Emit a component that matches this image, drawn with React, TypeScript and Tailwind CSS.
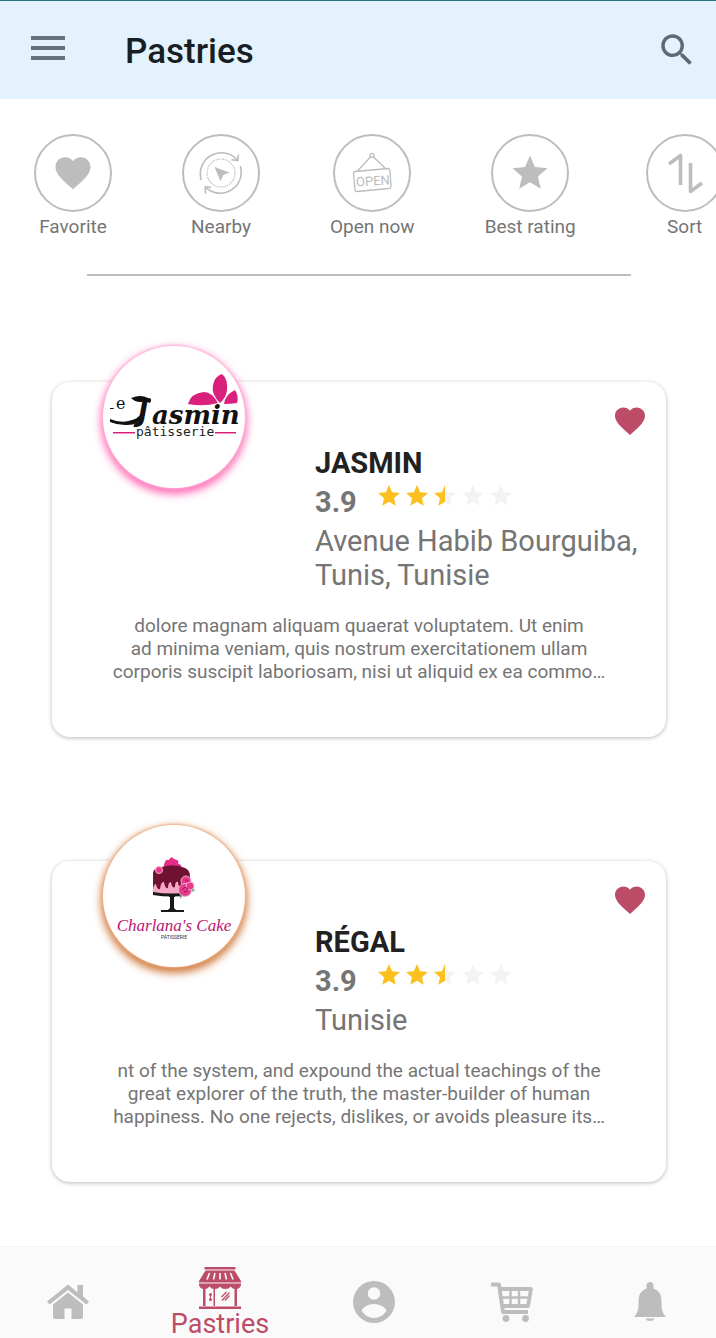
import React from 'react';

const HEART =
  'M12 21.35l-1.45-1.32C5.4 15.36 2 12.28 2 8.5 2 5.42 4.42 3 7.5 3c1.74 0 3.41.81 4.5 2.09C13.09 3.81 14.76 3 16.5 3 19.58 3 22 5.42 22 8.5c0 3.78-3.4 6.86-8.55 11.54L12 21.35z';
const STAR =
  'M12 17.27L18.18 21l-1.64-7.03L22 9.24l-7.19-.61L12 2 9.19 8.63 2 9.24l5.46 4.73L5.82 21z';

function NearbyIcon() {
  return (
    <svg viewBox="0 0 48 48" className="size-12" fill="none" stroke="#bdbdbd" strokeWidth="1.6">
      <path d="M4.3 31A21 21 0 0 1 39.8 10.5M43.3 17A21 21 0 0 1 9.2 38.800" />
      <path d="M34.500 10.800l6.300.7.6-6M8.500 44.500l-.3-6.700 6 .6" />
      <circle cx="24" cy="24" r="14" strokeWidth="1.200" strokeDasharray="1.400 1" />
      <path d="M17.500 18l15 5.600-6.200 2.400-2.800 6.300z" fill="#bdbdbd" stroke="none" />
    </svg>
  );
}

function OpenIcon() {
  return (
    <svg viewBox="0 0 48 48" className="size-12" fill="none" stroke="#bdbdbd" strokeWidth="1.300">
      <circle cx="24" cy="6.300" r="2" />
      <path d="M22.500 8L9 22.500M25.500 8L38 20" />
      <path d="M7 22.500l33-3q1.800 0 2 2l1 16q0 1.800-2 2l-32 3q-2 0-2-2l-1.500-16q0-2 1.500-2z" />
      <text
        x="8"
        y="36.500"
        transform="rotate(-4 24 32)"
        fontFamily="Roboto, sans-serif"
        fontSize="13"
        fill="#bdbdbd"
        stroke="none"
      >
        OPEN
      </text>
    </svg>
  );
}

function SortIcon() {
  return (
    <svg viewBox="0 0 48 48" className="size-12" fill="none" stroke="#bdbdbd" strokeWidth="3.600" strokeLinejoin="round">
      <path d="M8 15L19.500 6.500V36M29.500 14v28.500L41 34" />
    </svg>
  );
}

function ShopIcon() {
  return (
    <svg viewBox="0 0 42 44" className="h-11 w-[42px] shrink-0" fill="#bc4c68">
      <path d="M5.500 1h31v2.500h-31zM6.500 4.500h29L42 15v1.500H0V15z" />
      <path d="M0 17.500h42v1.500q-1 4-5.200 4-3.600 0-5.200-2.500-1.600 2.500-5.300 2.500T21 20.500Q19.400 23 15.800 23t-5.300-2.500Q8.800 23 5.200 23 1 23 0 19z" />
      <path d="M4 22h2.500v18H4zM14.500 22H16v18h-1.500zM35.500 22H38v18h-2.500zM0 40.500h42V43H0z" />
      <circle cx="11.500" cy="28.500" r="1.500" />
      <circle cx="11.500" cy="33.500" r="1.500" />
      <path d="M11 28h1v6h-1z" />
      <path d="M22.500 31l5-5M23 34.500l7.500-8M26 34.500l4.500-5" stroke="#bc4c68" strokeWidth="1.300" />
      <path d="M10.500 7L8 13.500M16 7l-1.500 6.500M21 7v6.500M26 7l1.500 6.500M31.500 7l2.500 6.500" stroke="#fafafa" strokeWidth="1.600" />
    </svg>
  );
}

function HomeIcon() {
  return (
    <svg viewBox="0 0 42 36" className="h-9 w-[42px]" fill="#bdbdbd">
      <path d="M21 .5L0 17.500l2.500 3L21 6l18.500 14.500 2.500-3-6-5V1h-5.500v7.500z" />
      <path d="M21 8.500L6 20.500V33q0 2 2 2h9.500V24.500h7V35H34q2 0 2-2V20.500z" />
    </svg>
  );
}

function AccountIcon() {
  return (
    <svg viewBox="0 0 42 42" className="size-[42px]">
      <circle cx="21" cy="21" r="21" fill="#bdbdbd" />
      <circle cx="21" cy="12.500" r="6.200" fill="#fafafa" />
      <path d="M8.500 29.500q4-6.500 12.500-6.500t12.500 6.500Q29 37 21 37T8.500 29.500z" fill="#fafafa" />
    </svg>
  );
}

function CartIcon() {
  return (
    <svg viewBox="0 0 42 40" className="h-10 w-[42px]" fill="none" stroke="#bdbdbd">
      <path d="M0 2.500h8l4 27.500h25" strokeWidth="3.800" strokeLinejoin="round" />
      <path d="M9 7h31l-3 17H12" strokeWidth="3.800" strokeLinejoin="round" />
      <path d="M10 15.500h28M19.500 7v16M28 7v16" strokeWidth="2.400" />
      <circle cx="15" cy="36.500" r="3.400" fill="#bdbdbd" stroke="none" />
      <circle cx="34.500" cy="36.500" r="3.400" fill="#bdbdbd" stroke="none" />
    </svg>
  );
}

function BellIcon() {
  return (
    <svg viewBox="0 0 32 40" className="h-10 w-8" fill="#bdbdbd">
      <path d="M16 0q3.500 0 3.500 3.500v3Q27 9 27.500 18v6q.5 7 4.500 11H0q4-4 4.500-11v-6Q5 9 12.500 6.500v-3Q12.500 0 16 0z" />
      <path d="M11.500 36.500h9q-1 2.500-4.500 2.500t-4.500-2.500z" />
    </svg>
  );
}

function JasminLogo() {
  return (
    <svg viewBox="0 0 142 142" className="size-full rounded-full" role="img" aria-label="Le Jasmin pâtisserie">
      <defs>
        <clipPath id="jasmin-frame">
          <rect x="7" y="20" width="128" height="90" />
        </clipPath>
      </defs>
      <g fill="#d9207c">
        <path d="M85 58q3-11 16-12 8 0 14 11-14 4-30 1z" />
        <path d="M117 57q-9-9-7-18 2-9 9-11 6 5 5 16-1 8-7 13z" />
        <path d="M121 58q1-9 11-14 4 6 2 13-6 1-13 1z" />
        <rect x="10" y="86" width="22" height="1.500" />
        <rect x="112" y="86" width="21" height="1.500" />
      </g>
      <g clipPath="url(#jasmin-frame)" fill="#111">
        <text x="4" y="63" fontFamily="DejaVu Sans, sans-serif" fontSize="12">L</text>
        <text x="13" y="63" fontFamily="DejaVu Serif, serif" fontSize="16">e</text>
        <path d="M7 73q12 5 22 1 5-1 9-6l4 1q-7 11-20 10-8 0-15-3zM28 52q10-4 17 0 5 0 2 5-4-2-10-1-5 0-9-4z" />
        <text x="35" y="75" fontFamily="DejaVu Sans, sans-serif" fontWeight="700" fontStyle="italic" fontSize="27">J</text>
        <text x="49" y="78" fontFamily="DejaVu Serif, serif" fontWeight="700" fontStyle="italic" fontSize="26">asmin</text>
      </g>
      <text x="33" y="90" fontFamily="DejaVu Sans Mono, monospace" fontSize="13" fill="#222">
        pâtisserie
      </text>
    </svg>
  );
}

function CharlanaLogo() {
  return (
    <svg viewBox="0 0 142 142" className="size-full rounded-full" role="img" aria-label="Charlana's Cake">
      <path d="M61 40q1-6 5-5 2-5 5-1 6 1 4 5 4 0 3 4H60z" fill="#e52b87" />
      <path d="M50 48q18-10 37 0v20q-18 5-37 0z" fill="#f6a8c8" />
      <path d="M50 48q0-5 9-6 13-4 23 1 5 2 5 9v9q-3 2-4-4-3-2-4 6-3 2-4-6-3-1-3 5-3 2-4-5-3 0-3 6-3 1-4-6-3-1-4 7-3 1-4-5-2 0-3 5z" fill="#6f1232" />
      <path d="M50 67q18 3 37 0v3q-18 3-37 0z" fill="#191919" />
      <path d="M66 70h6v2h-1v11l2 2h8v2H58v-2h7l2-2V72h-1z" fill="#191919" />
      <g fill="#e63b8d" stroke="#f7a9ca" strokeWidth="1">
        <circle cx="56" cy="45" r="3.500" />
        <circle cx="83" cy="56" r="5" />
        <circle cx="82" cy="65" r="6.500" />
        <circle cx="87" cy="61" r="4" />
      </g>
      <path d="M79 65q2-4 5-2 2 4-3 4M82 55q3-1 3 2" fill="none" stroke="#a31355" />
      <path d="M76 71l4-2-2 5zM89 64l4 1-4 2z" fill="#89a8a7" />
      <text
        x="71"
        y="106"
        textAnchor="middle"
        fontFamily="Liberation Serif, serif"
        fontStyle="italic"
        fontSize="17"
        fill="#b81872"
      >
        Charlana's Cake
      </text>
      <text x="71" y="114" textAnchor="middle" fontFamily="Roboto, sans-serif" fontSize="5" fill="#333">
        PÂTISSERIE
      </text>
    </svg>
  );
}

function Glyph({ d, className }: { d: string; className: string }) {
  return (
    <svg viewBox="0 0 24 24" className={className} fill="currentColor" aria-hidden="true">
      <path d={d} />
    </svg>
  );
}

const filters = [
  { label: 'Favorite', icon: <Glyph d={HEART} className="size-[42px] text-[#bdbdbd]" /> },
  { label: 'Nearby', icon: <NearbyIcon /> },
  { label: 'Open now', icon: <OpenIcon /> },
  { label: 'Best rating', icon: <Glyph d={STAR} className="size-[42px] text-[#bdbdbd]" /> },
  { label: 'Sort', icon: <SortIcon /> },
];

function Rating() {
  return (
    <div className="flex gap-1" role="img" aria-label="Rating stars">
      {[1, 1, 0.5, 0, 0].map((fill, i) => (
        <svg key={i} viewBox="1 1 22 22" className="size-6">
          <path d={STAR} fill="#f3f3f3" />
          {fill === 1 && <path d={STAR} fill="#fcc11e" />}
          {fill === 0.5 && <path d="M12 2v15.270L5.820 21l1.640-7.030L2 9.240l7.190-.61z" fill="#fcc11e" />}
        </svg>
      ))}
    </div>
  );
}

type Shop = {
  name: string;
  address: string[];
  about: string[];
  logo: React.ReactNode;
  ring: string;
};

const shops: Shop[] = [
  {
    name: 'JASMIN',
    address: ['Avenue Habib Bourguiba,', 'Tunis, Tunisie'],
    about: [
      'dolore magnam aliquam quaerat voluptatem. Ut enim',
      'ad minima veniam, quis nostrum exercitationem ullam',
      'corporis suscipit laboriosam, nisi ut aliquid ex ea commo…',
    ],
    logo: <JasminLogo />,
    ring: 'shadow-[0_0_2px_1px_#ffb5da,0_4px_8px_2px_#ff69b4]',
  },
  {
    name: 'RÉGAL',
    address: ['Tunisie'],
    about: [
      'nt of the system, and expound the actual teachings of the',
      'great explorer of the truth, the master-builder of human',
      'happiness. No one rejects, dislikes, or avoids pleasure its…',
    ],
    logo: <CharlanaLogo />,
    ring: 'shadow-[0_0_2px_1px_#edb58f,0_4px_8px_2px_#cf7638]',
  },
];

function ShopCard({ shop }: { shop: Shop }) {
  return (
    <article className="relative rounded-[18px] bg-white pt-16 pb-[54px] shadow-[0_1px_4px_rgba(0,0,0,0.28)]">
      <div className={`absolute -top-9 left-[51px] size-[142px] rounded-full bg-white ${shop.ring}`}>{shop.logo}</div>
      <button type="button" aria-label="Remove from favorites" className="absolute top-[21px] right-[18px] text-[#bc4c68]">
        <Glyph d={HEART} className="size-9" />
      </button>
      <div className="pl-[263px]">
        <h2 className="text-[29px] leading-[34px] font-bold text-[#212121]">{shop.name}</h2>
        <div className="mt-1 flex gap-5">
          <span className="text-[29px] leading-9 font-bold text-[#757575]">3.9</span>
          <Rating />
        </div>
        <p className="mt-1 text-[29px] leading-[34px] text-[#757575]">
          {shop.address.map((line) => (
            <span key={line} className="block whitespace-nowrap">{line}</span>
          ))}
        </p>
      </div>
      <p className="mt-[22px] text-center text-[19px] leading-[23px] text-[#757575]">
        {shop.about.map((line) => (
          <span key={line} className="block whitespace-nowrap">{line}</span>
        ))}
      </p>
    </article>
  );
}

const tabs = [
  { label: 'Home', icon: <HomeIcon /> },
  { label: 'Pastries', icon: <ShopIcon />, active: true },
  { label: 'Account', icon: <AccountIcon /> },
  { label: 'Cart', icon: <CartIcon /> },
  { label: 'Notifications', icon: <BellIcon /> },
];

export default function App() {
  return (
    <div className="overflow-hidden bg-white font-[Roboto,sans-serif]">
      <header className="flex h-[99px] items-center border-t border-[#2d7186] bg-[#e3f2fd] pr-[18px] pl-[31px]">
        <button type="button" aria-label="Menu" className="mb-1 flex w-[34px] flex-col gap-1.5">
          <span className="h-1 bg-[#66717a]" />
          <span className="h-1 bg-[#66717a]" />
          <span className="h-1 bg-[#66717a]" />
        </button>
        <h1 className="ml-[60px] flex-1 pt-1 text-[35px] leading-10 font-medium text-[#171f24]">Pastries</h1>
        <button type="button" aria-label="Search" className="text-[#5e6a72]">
          <Glyph
            d="M15.500 14h-.79l-.28-.27C15.410 12.590 16 11.110 16 9.500 16 5.910 13.090 3 9.500 3S3 5.910 3 9.500 5.910 16 9.500 16c1.610 0 3.090-.59 4.230-1.570l.27.28v.79l5 4.990L20.490 19l-4.990-5zm-6 0C7.010 14 5 11.990 5 9.500S7.010 5 9.500 5 14 7.010 14 9.500 11.990 14 9.500 14z"
            className="size-[42px]"
          />
        </button>
      </header>

      <nav aria-label="Filters" className="flex gap-[70px] overflow-hidden pt-[35px] pl-[34px]">
        {filters.map((f) => (
          <button key={f.label} type="button" className="flex shrink-0 flex-col items-center gap-1">
            <span className="flex size-[78px] items-center justify-center rounded-full border-2 border-[#bdbdbd]">
              {f.icon}
            </span>
            <span className="text-[19px] leading-[22px] text-[#757575]">{f.label}</span>
          </button>
        ))}
      </nav>
      <hr className="mt-9 mr-[85px] ml-[87px] border-t-2 border-[#bdbdbd]" />

      <main className="flex flex-col gap-[124px] pt-[106px] pr-[50px] pb-16 pl-[52px]">
        {shops.map((shop) => (
          <ShopCard key={shop.name} shop={shop} />
        ))}
      </main>

      <nav
        aria-label="Main"
        className="grid grid-cols-[128fr_176fr_132fr_144fr_132fr] border-t border-[#f4f4f4] bg-[#fafafa] pl-1"
      >
        {tabs.map((t) =>
          t.active ? (
            <a key={t.label} href="#pastries" className="flex flex-col items-center pt-[19px] text-[27px] leading-7 text-[#bc4c68]">
              {t.icon}
              {t.label}
            </a>
          ) : (
            <a key={t.label} href="#tab" aria-label={t.label} className="flex items-center justify-center pt-[18px]">
              {t.icon}
            </a>
          ),
        )}
      </nav>
    </div>
  );
}
